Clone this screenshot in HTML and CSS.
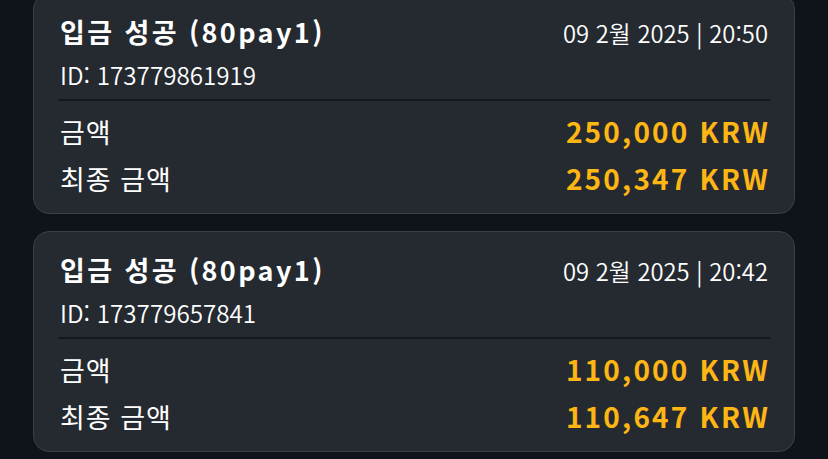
FILE: index.html
```html
<!DOCTYPE html>
<html lang="ko">
<head>
<meta charset="utf-8">
<link rel="stylesheet" href="styles.css">
</head>
<body>
<div class="list">
  <div class="card">
    <div class="head">
      <div class="title">입금 성공 (80pay1)</div>
      <div class="date">09 2월 2025 | 20:50</div>
    </div>
    <div class="id">ID: 173779861919</div>
    <div class="divider"></div>
    <div class="row"><span class="label">금액</span><span class="amount">250,000 KRW</span></div>
    <div class="row"><span class="label">최종 금액</span><span class="amount">250,347 KRW</span></div>
  </div>
  <div class="card">
    <div class="head">
      <div class="title">입금 성공 (80pay1)</div>
      <div class="date">09 2월 2025 | 20:42</div>
    </div>
    <div class="id">ID: 173779657841</div>
    <div class="divider"></div>
    <div class="row"><span class="label">금액</span><span class="amount">110,000 KRW</span></div>
    <div class="row"><span class="label">최종 금액</span><span class="amount">110,647 KRW</span></div>
  </div>
</div>
</body>
</html>
```

FILE: styles.css
```css
html, body {
  margin: 0;
  padding: 0;
  background: #0e141a;
  height: 100%;
  overflow: hidden;
}
body {
  font-family: "Noto Sans CJK KR", "Noto Sans", sans-serif;
  color: #ffffff;
}
.list {
  display: flex;
  flex-direction: column;
  gap: 17px;
  padding: 0 33px;
  margin-top: -7px;
}
.card {
  background: #252a31;
  border: 1px solid #3c3f44;
  border-radius: 16px;
  padding: 20px 26px 11px;
}
.head {
  display: flex;
  justify-content: space-between;
  align-items: baseline;
}
.title {
  font-size: 27px;
  font-weight: 700;
  line-height: 36px;
  letter-spacing: 2.4px;
}
.date {
  font-size: 23.8px;
  font-weight: 350;
}
.id {
  font-size: 24.2px;
  font-weight: 350;
  line-height: 32px;
  margin-top: 9px;
}
.divider {
  height: 2px;
  background: #14181d;
  margin: 8px -2px 7px;
}
.row {
  display: flex;
  justify-content: space-between;
  align-items: baseline;
  line-height: 47px;
}
.label {
  font-size: 27px;
  letter-spacing: 1px;
}
.amount {
  font-size: 28px;
  font-weight: 700;
  color: #fdb613;
  letter-spacing: 2.2px;
  margin-right: -2.2px;
}
```
